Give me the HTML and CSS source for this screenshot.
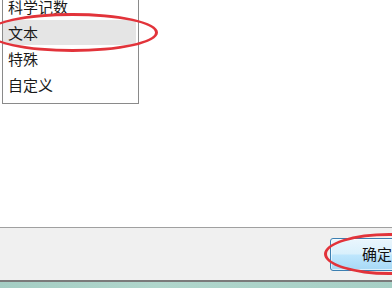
FILE: index.html
```html
<!DOCTYPE html>
<html>
<head>
<meta charset="utf-8">
<link rel="stylesheet" href="styles.css">
</head>
<body>
<div class="page">
  <div class="content">
    <ul class="listbox">
      <li class="item">科学记数</li>
      <li class="item selected">文本</li>
      <li class="item">特殊</li>
      <li class="item">自定义</li>
    </ul>
  </div>
  <div class="footer">
    <button class="btn">确定</button>
  </div>
  <div class="strip"></div>
  <div class="mark mark-list"></div>
  <div class="mark mark-btn"></div>
</div>
</body>
</html>
```
FILE: styles.css
```css
html, body {
  margin: 0;
  padding: 0;
  background: #ffffff;
}
.page {
  position: relative;
  width: 392px;
  height: 288px;
  overflow: hidden;
  font-family: "Noto Sans CJK SC", "Microsoft YaHei", sans-serif;
  display: flex;
  flex-direction: column;
}
.content {
  height: 227px;
  background: #ffffff;
}
.listbox {
  list-style: none;
  margin: -7px 0 0 2px;
  padding: 0 0 5px 0;
  width: 135px;
  border: 1px solid #8a8a8a;
}
.item {
  height: 26px;
  line-height: 26px;
  padding-left: 5px;
  margin-right: 2px;
  font-size: 15px;
  color: #1a1a1a;
}
.item.selected {
  background: #e5e5e5;
  height: 25px;
  line-height: 25px;
  margin-bottom: 1px;
}
.footer {
  border-top: 1px solid #a0a0a0;
  border-bottom: 2px solid #7a7a7a;
  background: #f0f0f0;
  display: flex;
  align-items: flex-start;
  box-sizing: border-box;
  height: 55px;
}
.btn {
  margin: 10px 0 0 330px;
  flex: 0 0 auto;
  width: 96px;
  height: 33px;
  border: 1px solid #3c7fb1;
  border-radius: 3px;
  background: linear-gradient(to bottom, #eaf6fd 0%, #d9f0fc 48%, #bee6fd 52%, #a7d9f5 100%);
  font-family: "Noto Sans CJK SC", sans-serif;
  font-size: 15px;
  color: #111;
  text-align: left;
  padding: 0 0 3px 31px;
  box-shadow: inset 0 0 0 1px rgba(255,255,255,0.6);
}
.strip {
  flex: 1 1 auto;
  background: linear-gradient(to right, #a4cdc3, #b0d6cc 40%, #a6cfc5);
}
.mark {
  position: absolute;
  border: 3px solid #e2333a;
  border-radius: 50%;
  box-sizing: border-box;
}
.mark-list {
  left: -13px;
  top: 13px;
  width: 171px;
  height: 39px;
}
.mark-btn {
  left: 324px;
  top: 233px;
  width: 130px;
  height: 42px;
}
```
